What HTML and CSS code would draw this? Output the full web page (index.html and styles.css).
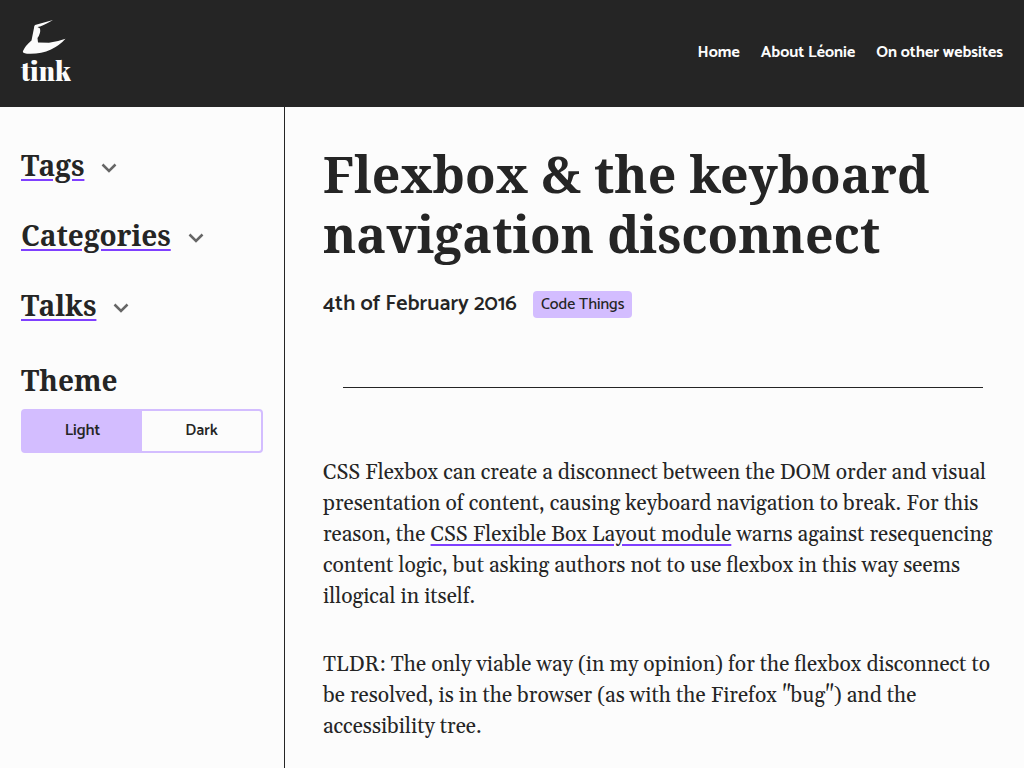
FILE: index.html
```html
<!DOCTYPE html>
<html lang="en">
<head>
<meta charset="utf-8">
<meta name="viewport" content="width=device-width, initial-scale=1">
<title>Flexbox &amp; the keyboard navigation disconnect</title>
<link rel="stylesheet" href="styles.css">
</head>
<body>
<header class="site-header">
  <a class="logo" href="#" aria-label="tink home">
    <svg class="logo-hat" viewBox="0 0 48 36" aria-hidden="true"><path d="M31 0 13 5Q12 6 12 8L9.500 20.500Q3 26 1 31Q0 33 5 33.700Q18 34.500 29 29.500Q38 25 43.500 18.700Q36 21.500 27 22.700L16 22.500 15.500 18Q19 13 18 8.500L15.500 7Q20 6.500 31 0Z"/></svg>
    <span class="logo-text">tink</span>
  </a>
  <nav class="site-nav">
    <a href="#">Home</a>
    <a href="#">About Léonie</a>
    <a href="#">On other websites</a>
  </nav>
</header>
<div class="layout">
  <aside class="sidebar">
    <div class="menu-row"><a href="#">Tags</a><button class="toggle" type="button" aria-label="Show tags"><svg viewBox="0 0 16 10"><path d="M1.500 1.500 8 8l6.500-6.500"/></svg></button></div>
    <div class="menu-row"><a href="#">Categories</a><button class="toggle" type="button" aria-label="Show categories"><svg viewBox="0 0 16 10"><path d="M1.500 1.500 8 8l6.500-6.500"/></svg></button></div>
    <div class="menu-row"><a href="#">Talks</a><button class="toggle" type="button" aria-label="Show talks"><svg viewBox="0 0 16 10"><path d="M1.500 1.500 8 8l6.500-6.500"/></svg></button></div>
    <h2 class="theme-title">Theme</h2>
    <div class="theme-switch">
      <button class="theme-button theme-button-on" type="button" aria-pressed="true">Light</button>
      <button class="theme-button" type="button" aria-pressed="false">Dark</button>
    </div>
  </aside>
  <main class="content">
    <h1 class="title">Flexbox &amp; the keyboard navigation disconnect</h1>
    <div class="meta"><time datetime="2016-02-04">4th of February 2016</time><a class="tag" href="#">Code Things</a></div>
    <hr class="rule">
    <p>CSS Flexbox can create a disconnect between the DOM order and visual presentation of content, causing keyboard navigation to break. For this reason, the <a href="#">CSS Flexible Box Layout module</a> warns against resequencing content logic, but asking authors not to use flexbox in this way seems illogical in itself.</p>
    <p>TLDR: The only viable way (in my opinion) for the flexbox disconnect to be resolved, is in the browser (as with the Firefox "bug") and the accessibility tree.</p>
  </main>
</div>
</body>
</html>
```
FILE: styles.css
```css
* { box-sizing: border-box; }
body {
  margin: 0;
  min-height: 100vh;
  display: flex;
  flex-direction: column;
  background: #fcfcfc;
  color: #252525;
  font: 21px/31px Gelasio, Georgia, "Liberation Serif", serif;
}
.site-header {
  display: flex;
  align-items: center;
  justify-content: space-between;
  padding: 20px 21px 21px;
  background: #252525;
}
.logo {
  display: flex;
  flex-direction: column;
  color: #fcfcfc;
  text-decoration: none;
}
.logo-hat { width: 48px; height: 36px; margin-left: 1px; fill: currentColor; }
.logo-text { font: 900 26px/30px "Playfair Display", "Abril Fatface", "Liberation Serif", serif; }
.site-nav { display: flex; gap: 21px; }
.site-nav a {
  color: #fcfcfc;
  font: bold 16px/24px Catamaran, Lato, sans-serif;
  text-decoration: none;
}
.layout { flex: 1; display: flex; }
.sidebar {
  width: 285px;
  flex: none;
  padding: 39px 21px;
  border-right: 1px solid #252525;
}
.menu-row {
  display: flex;
  align-items: center;
  gap: 17px;
  margin-bottom: 32px;
  font: bold 28px/38px "Noto Serif", "DejaVu Serif Condensed", "DejaVu Serif", serif;
}
.menu-row a, .content p a {
  color: inherit;
  text-decoration: underline #7f3fff 2px;
  text-underline-offset: 3px;
}
.toggle {
  display: flex;
  padding: 6px 0 0;
  border: 0;
  background: none;
}
.toggle svg {
  width: 16px;
  height: 10px;
  fill: none;
  stroke: #666;
  stroke-width: 2.5;
}
.theme-title {
  margin: 37px 0 10px;
  font: bold 28px/38px "Noto Serif", "DejaVu Serif Condensed", "DejaVu Serif", serif;
}
.theme-switch {
  display: flex;
  border: 2px solid #d3bdff;
  border-radius: 4px;
}
.theme-button {
  flex: 1;
  padding: 8px;
  border: 0;
  background: none;
  color: #252525;
  font: 600 16px/24px Catamaran, Lato, sans-serif;
}
.theme-button-on { background: #d3bdff; }
.content { flex: 1; min-width: 0; padding: 37px 21px 21px 38px; }
.title {
  margin: 0;
  font: bold 50px/60px "Noto Serif", "DejaVu Serif Condensed", "DejaVu Serif", serif;
}
.meta {
  display: flex;
  align-items: center;
  gap: 16px;
  margin-top: 27px;
  font: 600 22px/27px Catamaran, Lato, sans-serif;
}
.tag {
  padding: 2px 8px;
  border-radius: 4px;
  background: #d3bdff;
  color: #252525;
  font: 500 16px/23px Catamaran, Lato, sans-serif;
  text-decoration: none;
}
.rule {
  margin: 69px 20px 70px;
  border: 0;
  border-top: 1px solid #252525;
}
.content p { margin: 0; }
.content p + p { margin-top: 37px; }
```
